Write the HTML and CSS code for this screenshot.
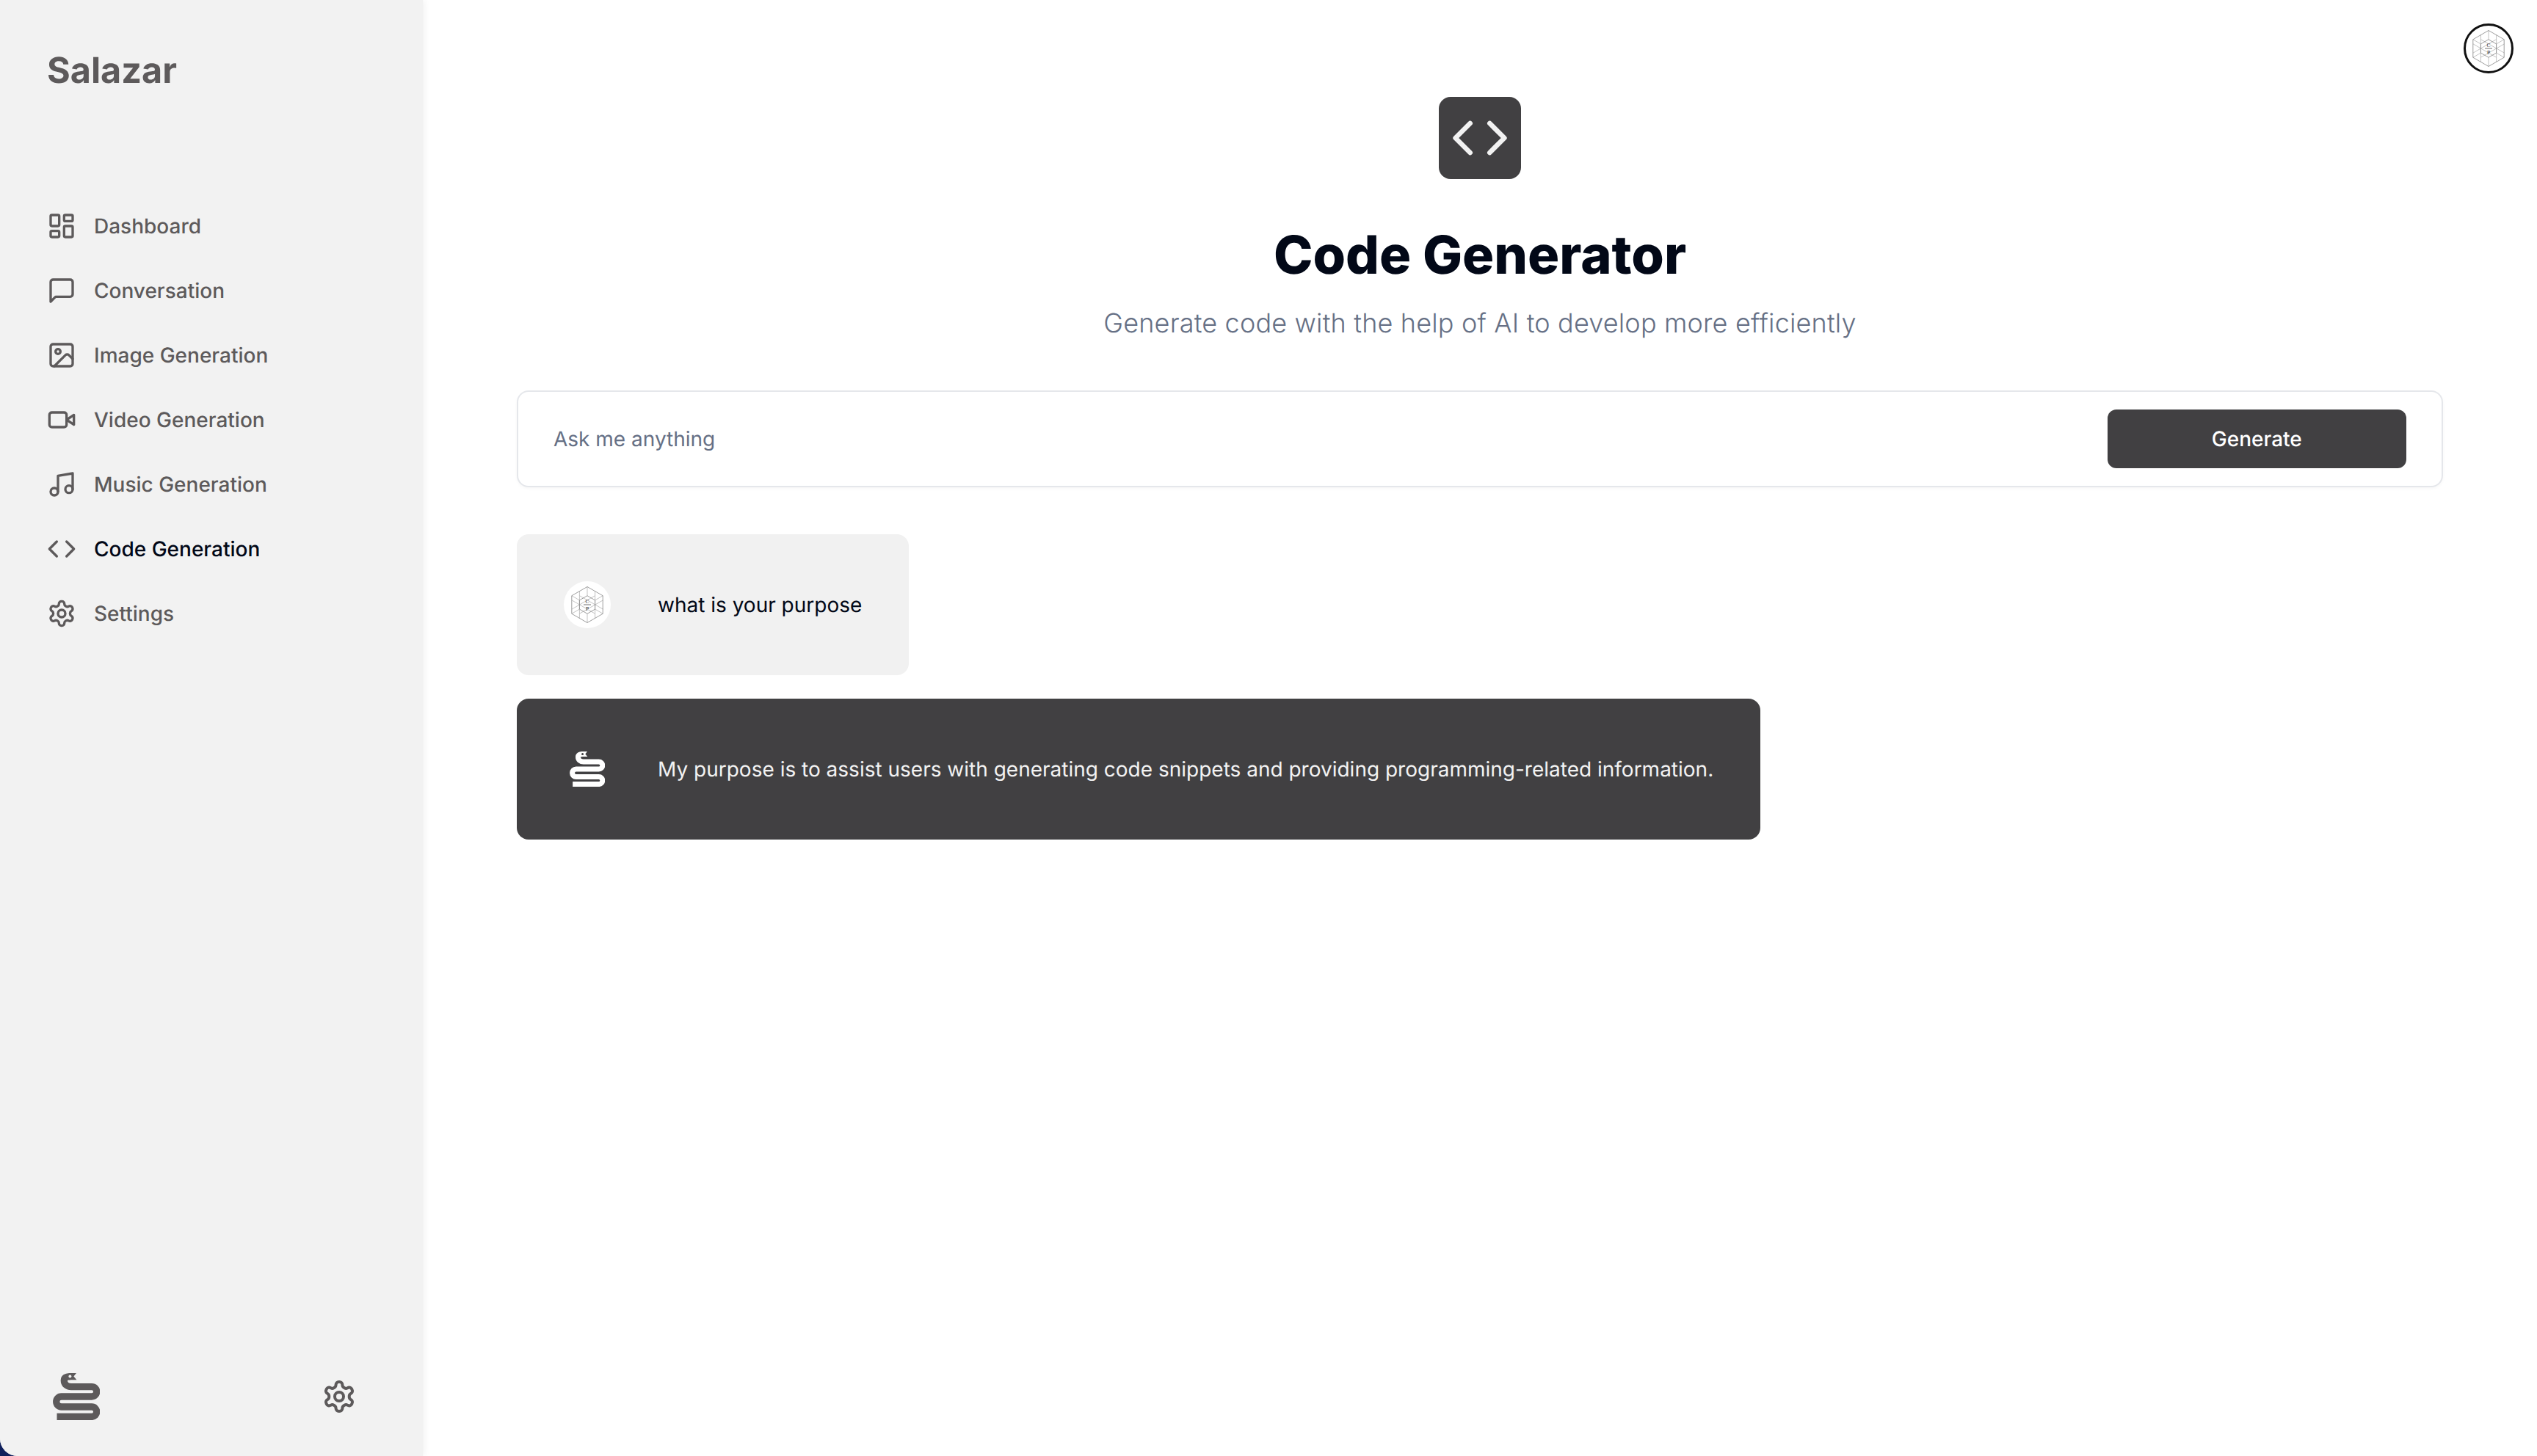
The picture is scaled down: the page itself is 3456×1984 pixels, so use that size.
FILE: index.html
```html
<!DOCTYPE html>
<html lang="en">
<head>
<meta charset="utf-8">
<title>Code Generator</title>
<link rel="stylesheet" href="styles.css">
</head>
<body>
<svg class="sprite" aria-hidden="true">
  <symbol id="hex" viewBox="0 0 64 64">
    <g class="hex-grid">
      <path d="M21.4 13.6V50.4M42.6 13.6V50.4M11 25.9 42.6 44.2M53.4 38.1 21.4 19.7M11 38.1 42.6 19.7M53.4 25.9 21.4 44.2M32 7.5V19.75M32 44.25V56.5M53.2 19.75 42.6 25.9M53.2 44.25 42.6 38.1M10.8 19.75 21.4 25.9M10.8 44.25 21.4 38.1"/>
    </g>
    <path class="hex-edge" d="M32 7.5 53.2 19.75V44.25L32 56.5 10.8 44.25V19.75Z"/>
    <path class="hex-inner" d="M32 19.75 42.6 25.9V38.1L32 44.25 21.4 38.1V25.9Z"/>
    <path class="hex-rule" d="M27 32H37"/>
    <text class="hex-letter" x="32" y="29.5">C</text>
    <text class="hex-letter" x="32" y="40">P</text>
  </symbol>
  <symbol id="snake" viewBox="0 0 64 64">
    <path class="snake-body" d="M5.5 59.4H53A6.7 6.7 0 0 0 53 46H11.7A7 7 0 0 1 11.7 32H53A6.7 6.7 0 0 0 53 18.6H25C19 18.6 15.3 15 15.3 10 15.3 6.5 18 4.6 24 4.6"/>
    <path class="snake-head" d="M22 0H32L28.4 4.6 32.4 9.3H22Z"/>
    <circle class="snake-eye" cx="23.4" cy="4.6" r="2"/>
  </symbol>
</svg>

<div class="app">
  <aside class="sidebar">
    <div class="brand">Salazar</div>
    <nav class="nav">
      <a class="nav-item">
        <svg class="icon" viewBox="0 0 24 24"><rect x="3" y="3" width="7" height="9" rx="1"/><rect x="14" y="3" width="7" height="5" rx="1"/><rect x="14" y="12" width="7" height="9" rx="1"/><rect x="3" y="16" width="7" height="5" rx="1"/></svg>
        <span>Dashboard</span>
      </a>
      <a class="nav-item">
        <svg class="icon" viewBox="0 0 24 24"><path d="M21 15a2 2 0 0 1-2 2H7l-4 4V5a2 2 0 0 1 2-2h14a2 2 0 0 1 2 2z"/></svg>
        <span>Conversation</span>
      </a>
      <a class="nav-item">
        <svg class="icon" viewBox="0 0 24 24"><rect x="3" y="3" width="18" height="18" rx="2"/><circle cx="9" cy="9" r="2"/><path d="m21 15-3.086-3.086a2 2 0 0 0-2.828 0L6 21"/></svg>
        <span>Image Generation</span>
      </a>
      <a class="nav-item">
        <svg class="icon" viewBox="0 0 24 24"><path d="m22 8-6 4 6 4V8Z"/><rect x="2" y="6" width="14" height="12" rx="2"/></svg>
        <span>Video Generation</span>
      </a>
      <a class="nav-item">
        <svg class="icon" viewBox="0 0 24 24"><path d="M9 18V5l12-2v13"/><circle cx="6" cy="18" r="3"/><circle cx="18" cy="16" r="3"/></svg>
        <span>Music Generation</span>
      </a>
      <a class="nav-item is-active">
        <svg class="icon" viewBox="0 0 24 24"><polyline points="16 18 22 12 16 6"/><polyline points="8 6 2 12 8 18"/></svg>
        <span>Code Generation</span>
      </a>
      <a class="nav-item">
        <svg class="icon" viewBox="0 0 24 24"><path d="M12.22 2h-.44a2 2 0 0 0-2 2v.18a2 2 0 0 1-1 1.73l-.43.25a2 2 0 0 1-2 0l-.15-.08a2 2 0 0 0-2.73.73l-.22.38a2 2 0 0 0 .73 2.73l.15.1a2 2 0 0 1 1 1.72v.51a2 2 0 0 1-1 1.74l-.15.09a2 2 0 0 0-.73 2.73l.22.38a2 2 0 0 0 2.73.73l.15-.08a2 2 0 0 1 2 0l.43.25a2 2 0 0 1 1 1.73V20a2 2 0 0 0 2 2h.44a2 2 0 0 0 2-2v-.18a2 2 0 0 1 1-1.73l.43-.25a2 2 0 0 1 2 0l.15.08a2 2 0 0 0 2.73-.73l.22-.39a2 2 0 0 0-.73-2.73l-.15-.08a2 2 0 0 1-1-1.74v-.5a2 2 0 0 1 1-1.74l.15-.09a2 2 0 0 0 .73-2.73l-.22-.38a2 2 0 0 0-2.73-.73l-.15.08a2 2 0 0 1-2 0l-.43-.25a2 2 0 0 1-1-1.73V4a2 2 0 0 0-2-2z"/><circle cx="12" cy="12" r="3"/></svg>
        <span>Settings</span>
      </a>
    </nav>
    <div class="sidebar-foot">
      <svg class="foot-logo"><use href="#snake"/></svg>
      <svg class="icon icon-lg" viewBox="0 0 24 24"><path d="M12.22 2h-.44a2 2 0 0 0-2 2v.18a2 2 0 0 1-1 1.73l-.43.25a2 2 0 0 1-2 0l-.15-.08a2 2 0 0 0-2.73.73l-.22.38a2 2 0 0 0 .73 2.73l.15.1a2 2 0 0 1 1 1.72v.51a2 2 0 0 1-1 1.74l-.15.09a2 2 0 0 0-.73 2.73l.22.38a2 2 0 0 0 2.73.73l.15-.08a2 2 0 0 1 2 0l.43.25a2 2 0 0 1 1 1.73V20a2 2 0 0 0 2 2h.44a2 2 0 0 0 2-2v-.18a2 2 0 0 1 1-1.73l.43-.25a2 2 0 0 1 2 0l.15.08a2 2 0 0 0 2.73-.73l.22-.39a2 2 0 0 0-.73-2.73l-.15-.08a2 2 0 0 1-1-1.74v-.5a2 2 0 0 1 1-1.74l.15-.09a2 2 0 0 0 .73-2.73l-.22-.38a2 2 0 0 0-2.73-.73l-.15.08a2 2 0 0 1-2 0l-.43-.25a2 2 0 0 1-1-1.73V4a2 2 0 0 0-2-2z"/><circle cx="12" cy="12" r="3"/></svg>
    </div>
  </aside>

  <main class="main">
    <header class="topbar">
      <div class="user-btn"><svg class="hex-art"><use href="#hex"/></svg></div>
    </header>
    <div class="content">
      <section class="heading">
        <div class="heading-icon">
          <svg viewBox="0 0 24 24"><polyline points="16 18 22 12 16 6"/><polyline points="8 6 2 12 8 18"/></svg>
        </div>
        <h1 class="title">Code Generator</h1>
        <p class="subtitle">Generate code with the help of AI to develop more efficiently</p>
      </section>

      <form class="prompt">
        <input class="prompt-input" type="text" placeholder="Ask me anything">
        <button class="prompt-btn" type="button">Generate</button>
      </form>

      <section class="messages">
        <article class="msg msg-user">
          <div class="msg-avatar"><svg class="hex-art"><use href="#hex"/></svg></div>
          <p>what is your purpose</p>
        </article>
        <article class="msg msg-bot">
          <div class="msg-avatar-bot"><svg class="bot-logo"><use href="#snake"/></svg></div>
          <p>My purpose is to assist users with generating code snippets and providing programming-related information.</p>
        </article>
      </section>
    </div>
  </main>
</div>
</body>
</html>
```

FILE: styles.css
```css
* { box-sizing: border-box; }

html, body {
  margin: 0;
  height: 100%;
}

body {
  background: #0f1f5c;
  font-family: Inter, "Liberation Sans", sans-serif;
  color: #020817;
  text-rendering: geometricPrecision;
}

.sprite {
  display: none;
}

.app {
  display: flex;
  height: 100vh;
  background: #fff;
  border-bottom-left-radius: 24px;
  overflow: hidden;
}

.sidebar {
  flex: 0 0 576px;
  z-index: 1;
  display: flex;
  flex-direction: column;
  padding: 64px 0 49px 64px;
  background: #f2f2f2;
  box-shadow: 2px 0 8px rgba(0, 0, 0, 0.06);
  color: #5d5a5b;
}

.brand {
  height: 64px;
  font-size: 48.5px;
  font-weight: 700;
  line-height: 64px;
  margin-bottom: 136px;
}

.nav {
  display: flex;
  flex-direction: column;
}

.nav-item {
  display: flex;
  align-items: center;
  gap: 24px;
  height: 88px;
  font-size: 28px;
  font-weight: 500;
}

.is-active {
  color: #020817;
}

.is-active .icon {
  color: #5d5a5b;
}

.icon {
  flex: none;
  width: 40px;
  height: 40px;
  fill: none;
  stroke: currentColor;
  stroke-width: 2;
  stroke-linecap: round;
  stroke-linejoin: round;
}

.icon-lg {
  width: 48px;
  height: 48px;
}

.sidebar-foot {
  margin-top: auto;
  display: flex;
  align-items: center;
  justify-content: space-between;
  padding-right: 90px;
}

.foot-logo {
  width: 64px;
  height: 64px;
  margin-left: 8px;
  --snake: #5d5a5b;
  --eye: #f2f2f2;
}

.snake-body {
  fill: none;
  stroke: var(--snake);
  stroke-width: 9.3;
}

.snake-head {
  fill: var(--snake);
}

.snake-eye {
  fill: var(--eye);
}

.main {
  flex: 1;
  min-width: 0;
  display: flex;
  flex-direction: column;
}

.topbar {
  display: flex;
  justify-content: flex-end;
  padding: 32px;
}

.user-btn {
  width: 68px;
  height: 68px;
  border: 3px solid #111;
  border-radius: 50%;
  background: #fff;
  display: flex;
  align-items: center;
  justify-content: center;
}

.hex-art {
  width: 64px;
  height: 64px;
  flex: none;
}

.hex-grid path {
  fill: none;
  stroke: #b4b4b4;
  stroke-width: 0.8;
}

.hex-edge, .hex-inner {
  fill: none;
  stroke: #858585;
  stroke-width: 0.8;
}

.hex-rule {
  stroke: #333;
  stroke-width: 0.7;
}

.hex-letter {
  font-family: "Liberation Serif", serif;
  font-size: 7.5px;
  text-anchor: middle;
  fill: #333;
}

.content {
  padding: 0 128px;
}

.heading {
  display: flex;
  flex-direction: column;
  align-items: center;
  margin-bottom: 64px;
}

.heading-icon {
  width: 112px;
  height: 112px;
  padding: 16px;
  border-radius: 16px;
  background: #414042;
  margin-bottom: 64px;
}

.heading-icon svg {
  display: block;
  width: 80px;
  height: 80px;
  fill: none;
  stroke: #f2f2f2;
  stroke-width: 2;
  stroke-linecap: round;
  stroke-linejoin: round;
}

.title {
  margin: 0 0 24px;
  font-size: 72px;
  font-weight: 800;
  line-height: 80px;
  color: #020817;
}

.subtitle {
  margin: 0;
  font-size: 36px;
  font-weight: 300;
  letter-spacing: 0.17px;
  line-height: 56px;
  color: #667085;
}

.prompt {
  display: grid;
  grid-template-columns: repeat(12, 1fr);
  gap: 16px;
  padding: 24px 48px;
  border: 2px solid #e5e7eb;
  border-radius: 16px;
  background: #fff;
  box-shadow: 0 2px 4px rgba(0, 0, 0, 0.03);
}

.prompt-input {
  grid-column: span 10;
  height: 80px;
  padding: 0;
  border: 0;
  outline: 0;
  background: transparent;
  font: 400 28px Inter, sans-serif;
  text-rendering: geometricPrecision;
}

.prompt-input::placeholder {
  color: #667085;
  opacity: 1;
}

.prompt-btn {
  grid-column: span 2;
  height: 80px;
  border: 0;
  border-radius: 12px;
  background: #414042;
  color: #fff;
  font: 500 28px Inter, sans-serif;
  text-rendering: geometricPrecision;
}

.messages {
  display: flex;
  flex-direction: column;
  align-items: flex-start;
  gap: 32px;
  margin-top: 64px;
}

.msg {
  display: flex;
  align-items: center;
  gap: 64px;
  padding: 64px;
  border-radius: 16px;
  font-size: 28px;
  line-height: 40px;
}

.msg p {
  margin: 0;
}

.msg-user {
  background: #f1f1f1;
  color: #020817;
}

.msg-bot {
  background: #414042;
  color: #f2f2f2;
  --snake: #fff;
  --eye: #414042;
}

.msg-avatar, .msg-avatar-bot {
  flex: none;
  width: 64px;
  height: 64px;
  display: flex;
  align-items: center;
  justify-content: center;
}

.msg-avatar {
  border-radius: 50%;
  background: #fff;
}

.bot-logo {
  width: 48px;
  height: 48px;
}
```
